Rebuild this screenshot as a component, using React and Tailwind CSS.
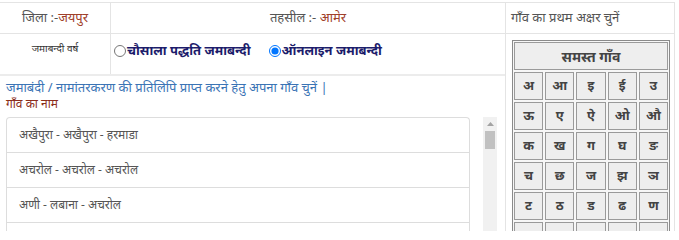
import React from 'react';

const letters = [
  'अ', 'आ', 'इ', 'ई', 'उ',
  'ऊ', 'ए', 'ऐ', 'ओ', 'औ',
  'क', 'ख', 'ग', 'घ', 'ङ',
  'च', 'छ', 'ज', 'झ', 'ञ',
  'ट', 'ठ', 'ड', 'ढ', 'ण',
  'त', 'थ', 'द', 'ध', 'न',
];

const villages = [
  'अखैपुरा - अखैपुरा - हरमाडा',
  'अचरोल - अचरोल - अचरोल',
  'अणी - लबाना - अचरोल',
  'आकेड़ा डूंगर - आकेड़ा - आमेर',
  'आमेर - आमेर - आमेर',
];

const font = { fontFamily: '"Noto Sans", "Liberation Sans", sans-serif' };

export default function App() {
  return (
    <div className="w-[679px] h-[231px] overflow-hidden bg-white pt-[2px]" style={font}>
      <div className="flex w-[675px] border-t border-[#e4e4e4]">
        {/* left block */}
        <div className="w-[505px] flex flex-col">
          <div className="flex h-[31px] shrink-0 border-b border-[#e4e4e4] text-[13px] text-[#555]">
            <div className="w-[111px] border-r border-[#e4e4e4] flex items-center justify-center">
              जिला :-<span className="text-[#a0402a]">जयपुर</span>
            </div>
            <div className="flex-1 flex items-center justify-center">
              तहसील :-&nbsp;<span className="text-[#a0402a]">आमेर</span>
            </div>
          </div>

          <div className="flex h-[42px] shrink-0 border-b-2 border-[#ececec]">
            <div className="w-[111px] border-r border-[#e4e4e4] flex justify-center pt-[7px] text-[10px] text-[#333]">
              जमाबन्दी वर्ष
            </div>
            <div className="flex-1 flex items-start pt-[7px] pl-[3px] gap-[18px] text-[13px] font-bold text-[#1c1c6b]">
              <label className="flex items-center">
                <input type="radio" name="jb" className="w-[12px] h-[12px] m-0 mr-[1px]" />
                चौसाला पद्धति जमाबन्दी
              </label>
              <label className="flex items-center">
                <input type="radio" name="jb" defaultChecked className="w-[12px] h-[12px] m-0 mr-[1px]" />
                ऑनलाइन जमाबन्दी
              </label>
            </div>
          </div>

          <div className="pl-[6px] pt-[3px] text-[13px] leading-[16px] text-[#3b74b5]">
            जमाबंदी / नामांतरकरण की प्रतिलिपि प्राप्त करने हेतु अपना गाँव चुनें |
          </div>
          <div className="pl-[6px] pt-[1px] text-[12px] leading-[16px] text-[#8b2e1a]">गाँव का नाम</div>

          <div className="mt-[5px] ml-[6px] flex gap-[13px] h-[200px]">
            <div className="w-[464px] border border-b-0 border-[#ddd] rounded-t-[4px] overflow-hidden">
              {villages.map((v, i) => (
                <div
                  key={i}
                  className="h-[35px] flex items-center pl-[12px] text-[12px] text-[#555] border-b border-[#ddd]"
                >
                  {v}
                </div>
              ))}
            </div>
            {/* scrollbar */}
            <div className="w-[14px] bg-[#f1f1f1] flex flex-col items-center">
              <div className="h-[14px] flex items-center justify-center">
                <svg width="7" height="4" viewBox="0 0 7 4">
                  <path d="M0 4 L3.5 0 L7 4 Z" fill="#a3a3a3" />
                </svg>
              </div>
              <div className="w-[10px] h-[18px] bg-[#c1c1c1]" />
            </div>
          </div>
        </div>

        {/* right block */}
        <div className="w-[170px] border-l border-r border-[#e4e4e4] flex flex-col">
          <div className="h-[31px] shrink-0 border-b border-[#e4e4e4] flex items-center pl-[5px] text-[13px] text-[#555]">
            गाँव का प्रथम अक्षर चुनें
          </div>
          <div className="pl-[6px] pt-[6px]">
            <div className="w-[158px] grid grid-cols-5 gap-[2px] p-[1px] border border-[#8a8a8a] bg-[#f7f7f7]">
              <div className="col-span-5 h-[28px] border border-[#9a9a9a] bg-[#eeeeee] flex items-center justify-center text-[14px] font-bold text-[#444]">
                समस्त गाँव
              </div>
              {letters.map((l) => (
                <div
                  key={l}
                  className="h-[28px] border border-[#9a9a9a] bg-[#eeeeee] flex items-center justify-center text-[13px] font-bold text-[#444]"
                >
                  {l}
                </div>
              ))}
            </div>
          </div>
        </div>
      </div>
    </div>
  );
}
